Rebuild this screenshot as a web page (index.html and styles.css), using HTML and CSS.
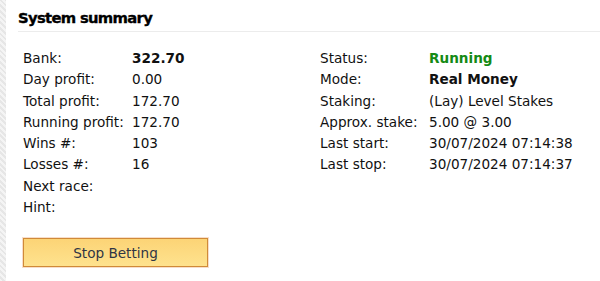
FILE: index.html
```html
<!DOCTYPE html>
<html>
<head>
<meta charset="utf-8">
<link rel="stylesheet" href="styles.css">
</head>
<body>
<div class="page">
  <div class="strip"></div>
  <div class="card">
    <div class="card-head"><h2 class="title">System summary</h2></div>
    <div class="card-body">
      <div class="cols">
        <div class="col">
          <div class="row"><span class="lbl">Bank:</span><span class="val bold">322.70</span></div>
          <div class="row"><span class="lbl">Day profit:</span><span class="val">0.00</span></div>
          <div class="row"><span class="lbl">Total profit:</span><span class="val">172.70</span></div>
          <div class="row"><span class="lbl">Running profit:</span><span class="val">172.70</span></div>
          <div class="row"><span class="lbl">Wins #:</span><span class="val">103</span></div>
          <div class="row"><span class="lbl">Losses #:</span><span class="val">16</span></div>
          <div class="row"><span class="lbl">Next race:</span><span class="val"></span></div>
          <div class="row"><span class="lbl">Hint:</span><span class="val"></span></div>
        </div>
        <div class="col">
          <div class="row"><span class="lbl">Status:</span><span class="val bold green">Running</span></div>
          <div class="row"><span class="lbl">Mode:</span><span class="val bold">Real Money</span></div>
          <div class="row"><span class="lbl">Staking:</span><span class="val">(Lay) Level Stakes</span></div>
          <div class="row"><span class="lbl">Approx. stake:</span><span class="val">5.00 @ 3.00</span></div>
          <div class="row"><span class="lbl">Last start:</span><span class="val">30/07/2024 07:14:38</span></div>
          <div class="row"><span class="lbl">Last stop:</span><span class="val">30/07/2024 07:14:37</span></div>
        </div>
      </div>
      <button class="btn">Stop Betting</button>
    </div>
  </div>
</div>
</body>
</html>
```
FILE: styles.css
```css
html, body { margin: 0; padding: 0; background: #fff; }
body { font-family: "DejaVu Sans", Verdana, sans-serif; font-size: 13.6px; color: #111; }
.page { display: flex; height: 281px; overflow: hidden; }
.strip {
  width: 6px; flex: none;
  background-color: #ececec;
  background-image: repeating-linear-gradient(45deg, #f4f4f4 0 2px, #e6e6e6 2px 4px);
}
.card { flex: 1; padding-left: 12px; }
.card-head { height: 32px; border-bottom: 1px solid #ececec; box-sizing: border-box; }
.title { margin: 0; padding-top: 9px; font-size: 14.8px; letter-spacing: -0.7px; font-weight: bold; color: #000; line-height: 18px; -webkit-text-stroke: 0.35px #000; }
.card-body { padding: 16px 0 0 5px; }
.cols { display: flex; }
.col { width: 297px; }
.row { display: flex; height: 21.3px; line-height: 21px; }
.lbl { width: 109px; flex: none; }
.bold { font-weight: bold; }
.green { color: #148a14; }
.btn {
  display: block;
  margin-top: 20px;
  width: 185px; height: 29px;
  font-family: "DejaVu Sans", Verdana, sans-serif; font-size: 13.6px; color: #2f3545;
  background: linear-gradient(#fcd476, #fee28e);
  border: 1px solid #d08a38;
  border-radius: 0;
  box-shadow: 0 0 0 1px rgba(240,190,150,0.5);
  padding: 0;
}
```
